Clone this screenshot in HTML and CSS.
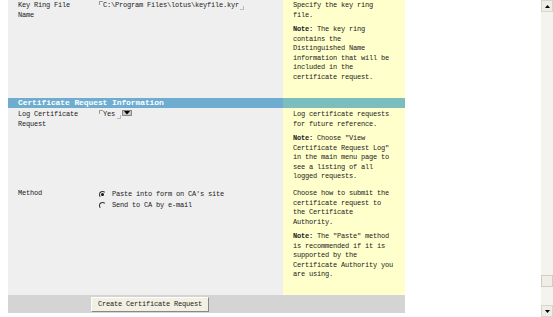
FILE: index.html
```html
<!DOCTYPE html>
<html lang="en">
<head>
  <meta charset="UTF-8" />
  <title>Certificate Request</title>
  <link rel="stylesheet" href="styles.css">
</head>
<body>
  <div class="page">
    <main class="content">
      <div class="form">

        <div class="row row-keyring">
          <div class="label">Key Ring File Name</div>
          <div class="value"><span class="field">C:\Program Files\lotus\keyfile.kyr</span></div>
          <div class="help">
            <p>Specify the key ring file.</p>
            <p><b>Note:</b> The key ring<br>contains the Distinguished Name information that will be included in the certificate request.</p>
          </div>
        </div>

        <div class="section">
          <div class="section-title">Certificate Request Information</div>
          <div class="section-side"></div>
        </div>

        <div class="row row-log">
          <div class="label">Log Certificate Request</div>
          <div class="value">
            <span class="field select">Yes</span><span class="drop"><svg width="6" height="4" viewBox="0 0 6 4"><path d="M0 0H6L3 3.5Z" fill="#000"/></svg></span>
          </div>
          <div class="help">
            <p>Log certificate requests for future reference.</p>
            <p><b>Note:</b> Choose "View<br>Certificate Request Log" in the main menu page to see a listing of all logged requests.</p>
          </div>
        </div>

        <div class="row row-method">
          <div class="label">Method</div>
          <div class="value">
            <div class="radio-line"><span class="radio checked"></span>Paste into form on CA's site</div>
            <div class="radio-line"><span class="radio"></span>Send to CA by e-mail</div>
          </div>
          <div class="help">
            <p>Choose how to submit the certificate request to the Certificate Authority.</p>
            <p><b>Note:</b> The "Paste" method<br>is recommended if it is supported by the Certificate Authority you are using.</p>
          </div>
        </div>

        <div class="actions">
          <button class="btn">Create Certificate Request</button>
        </div>

      </div>
    </main>

    <div class="scrollbar">
      <div class="sb-btn"><svg width="5" height="3" viewBox="0 0 5 3"><path d="M2.5 0L5 3H0Z" fill="#000"/></svg></div>
      <div class="sb-track">
        <div class="sb-thumb"></div>
      </div>
      <div class="sb-btn"><svg width="5" height="3" viewBox="0 0 5 3"><path d="M0 0H5L2.5 3Z" fill="#000"/></svg></div>
    </div>
  </div>
</body>
</html>
```

FILE: styles.css
```css
body {
  margin: 0;
  background: #fff;
  font-family: "Liberation Mono", "DejaVu Sans Mono", monospace;
  font-size: 7px;
  letter-spacing: -0.2px;
  line-height: 9.5px;
  color: #222;
}

.page {
  display: flex;
  height: 317px;
  overflow: hidden;
}

.content {
  flex: 1;
  padding-left: 8px;
}

.form {
  width: 397px;
}

.row {
  display: grid;
  grid-template-columns: 82px 193px 122px;
}

.row-keyring { height: 98px; }
.row-log { height: 76px; }
.row-method { height: 111px; }

.label,
.value {
  background-color: #efefef;
}

.label {
  padding: 1px 4px 0 10px;
}

.value {
  padding-left: 8px;
  padding-top: 1px;
}

.help {
  background-color: #ffffcc;
  padding: 1px 9px 0 10px;
}

.help p {
  margin: 0 0 5px 0;
}

.row-log .label,
.row-log .value,
.row-log .help {
  padding-top: 2px;
}

.row-method .label,
.row-method .value,
.row-method .help {
  padding-top: 5px;
}

.row-method .value {
  padding-left: 9px;
}

/* flat input look with little corner ticks */
.field {
  position: relative;
  display: inline-block;
  padding: 0 6px 0 5px;
}

.field::before,
.field::after {
  content: "";
  position: absolute;
  width: 3px;
  height: 3px;
}

.field::before {
  left: 1px;
  top: 0;
  border-left: 1px solid #999;
  border-top: 1px solid #999;
}

.field::after {
  right: 1px;
  bottom: 1px;
  border-right: 1px solid #bbb;
  border-bottom: 1px solid #bbb;
}

.select {
  padding-right: 7px;
}

.drop {
  display: inline-flex;
  align-items: center;
  justify-content: center;
  width: 10px;
  height: 6px;
  vertical-align: 1px;
  background-color: #c8c8c8;
  border: 1px solid #888;
  box-sizing: border-box;
}

.radio-line {
  display: flex;
  align-items: center;
  gap: 6px;
  height: 12.5px;
  margin-top: -1px;
}

.radio {
  width: 7px;
  height: 7px;
  border-radius: 50%;
  border: 1px solid transparent;
  border-top-color: #333;
  border-left-color: #333;
  box-sizing: border-box;
  position: relative;
}

.radio.checked::after {
  content: "";
  position: absolute;
  left: 1px;
  top: 1px;
  width: 3px;
  height: 3px;
  border-radius: 50%;
  background-color: #111;
}

.section {
  display: grid;
  grid-template-columns: 275px 122px;
  height: 10px;
}

.section-title {
  background-color: #6eacd0;
  color: #fff;
  font-weight: bold;
  font-size: 8px;
  letter-spacing: -0.1px;
  line-height: 10px;
  padding-left: 10px;
}

.section-side {
  background-color: #7cbdbd;
}

.actions {
  background-color: #d4d4d4;
  height: 18px;
  padding-left: 83px;
  display: flex;
  align-items: center;
}

.btn {
  font-family: inherit;
  font-size: 7px;
  letter-spacing: -0.2px;
  color: #222;
  height: 15px;
  padding: 0 6px;
  background-color: #f2f0e2;
  border: 1px solid #fff;
  border-right-color: #888;
  border-bottom-color: #888;
  cursor: pointer;
}

.scrollbar {
  width: 12px;
  display: flex;
  flex-direction: column;
  background-color: #f4f3ee;
}

.sb-btn {
  height: 12px;
  display: flex;
  align-items: center;
  justify-content: center;
  background-color: #efeee6;
  border: 1px solid #d8d6cc;
  box-sizing: border-box;
}

.sb-track {
  flex: 1;
  display: flex;
  flex-direction: column;
  justify-content: flex-end;
  padding-bottom: 18px;
}

.sb-thumb {
  height: 12px;
  background-color: #efede4;
  border: 1px solid #d0cec4;
  box-sizing: border-box;
}
```
